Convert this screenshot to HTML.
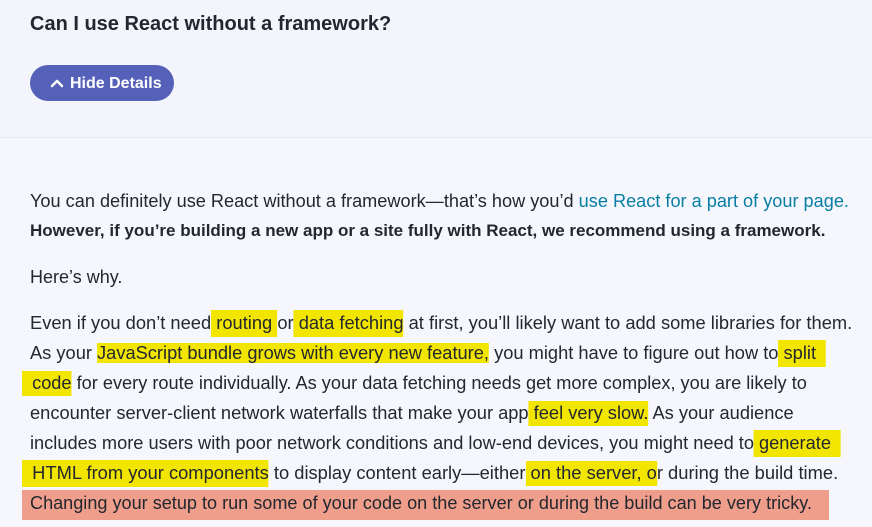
<!DOCTYPE html>
<html><head><style>
body{margin:0;width:872px;height:527px;overflow:hidden;background:#f6f7fd;font-family:"Liberation Sans",sans-serif;color:#23272f;position:relative}
.top{position:absolute;left:0;top:0;width:872px;height:137px;background:#f3f4fc;border-bottom:1px solid #e6e8f5}
h3{position:absolute;left:30px;top:13px;margin:0;font-size:20px;font-weight:bold}
.btn{position:absolute;left:30px;top:65px;width:144px;height:36px;border-radius:18px;background:#5561b8;color:#fff;font-weight:bold;font-size:16px;line-height:38px}
.btn span{position:absolute;left:40px}
.l{position:absolute;left:30px;font-size:18px;white-space:nowrap;line-height:30px;transform-origin:0 50%}
.h{background:#f2e600;display:inline-block;line-height:27px}
a{color:#087ea4;text-decoration:none}
.red{position:absolute;left:22px;top:490px;width:807px;height:30px;background:#ee9e8a}
</style></head><body>
<div class="top"></div>
<h3>Can I use React without a framework?</h3>
<div class="btn"><svg style="position:absolute;left:20px;top:12px" width="14" height="12" viewBox="0 0 14 12"><path d="M2 9 L7 4 L12 9" stroke="#fff" stroke-width="2.5" fill="none" stroke-linecap="round" stroke-linejoin="round"/></svg><span>Hide Details</span></div>
<div class="red"></div>
<div class="l" style="top:186px;transform:scaleX(1.008)">You can definitely use React without a framework—that’s how you’d <a>use React for a part of your page.</a></div>
<div class="l" style="top:216px;font-weight:bold;font-size:17px">However, if you’re building a new app or a site fully with React, we recommend using a framework.</div>
<div class="l" style="top:262px">Here’s why.</div>
<div class="l" style="top:308px;transform:scaleX(1.017)">Even if you don’t need<span class="h">&nbsp;routing&nbsp;</span>or<span class="h">&nbsp;data fetching</span> at first, you’ll likely want to add some libraries for them.</div>
<div class="l" style="top:338px;transform:scaleX(1.015)">As your <span class="h" style="line-height:20px">JavaScript bundle grows with every new feature,</span> you might have to figure out how to<span class="h">&nbsp;split&nbsp;&nbsp;</span></div>
<div class="l" style="top:368px;left:22px;transform:scaleX(1.01)"><span class="h" style="line-height:25px">&nbsp;&nbsp;code</span> for every route individually. As your data fetching needs get more complex, you are likely to</div>
<div class="l" style="top:398px;transform:scaleX(1.015)">encounter server-client network waterfalls that make your app<span class="h" style="line-height:25px">&nbsp;feel very slow.</span> As your audience</div>
<div class="l" style="top:428px;transform:scaleX(1.012)">includes more users with poor network conditions and low-end devices, you might need to<span class="h">&nbsp;generate&nbsp;&nbsp;</span></div>
<div class="l" style="top:458px;left:22px;transform:scaleX(1.018)"><span class="h">&nbsp;&nbsp;HTML from your components</span> to display content early—either<span class="h" style="line-height:25px">&nbsp;on the server, o</span>r during the build time.</div>
<div class="l" style="top:488px;transform:scaleX(1.005)">Changing your setup to run some of your code on the server or during the build can be very tricky.</div>
</body></html>
